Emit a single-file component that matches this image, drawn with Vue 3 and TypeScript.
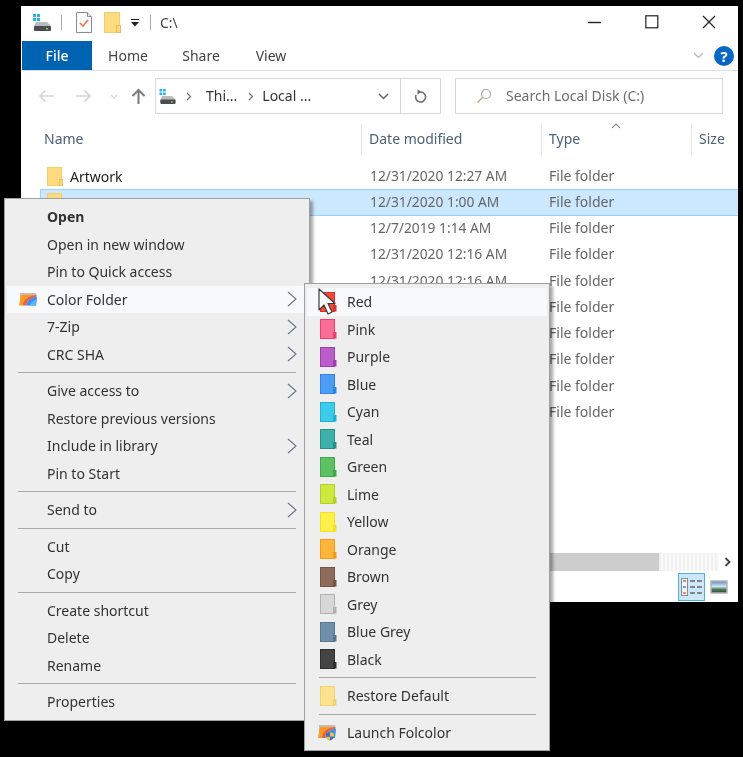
<template>
  <div class="screen">
    <div class="explorer">
      <header class="titlebar">
        <svg class="drive" width="20" height="18" viewBox="0 0 20 18">
          <path d="M1 1h3v3H1zM5 1h3v3H5zM1 5h3v3H1zM5 5h3v3H5z" fill="#1fb6ee" />
          <path d="M4 9h11l4 4v4H2v-4z" fill="#b9bcbd" />
          <rect x="2" y="13" width="17" height="5" rx="1" fill="#4a4d4f" />
          <rect x="14" y="15" width="2" height="1.5" fill="#5fe05f" />
        </svg>
        <i class="tick-sep first" />
        <svg class="title-doc" width="16" height="21" viewBox="0 0 16 21">
          <path d="M.5.5h11l4 4v16H.5z" fill="#fbfbfb" stroke="#8b8b8b" />
          <path d="M11.500.5v4h4" fill="#e6e6e6" stroke="#8b8b8b" />
          <path d="M4 11l3 3 5-6" fill="none" stroke="#ee7a50" stroke-width="1.600" />
        </svg>
        <svg class="title-folder" width="17" height="21" viewBox="0 0 17 21">
          <rect x=".5" y=".5" width="15" height="20" fill="#fddb7e" stroke="#f3cd6c" />
          <rect x="12.500" y="13.500" width="4" height="7" fill="#fbd878" stroke="#e9c05c" />
        </svg>
        <svg class="qa-caret" width="10" height="8" viewBox="0 0 10 8">
          <path d="M1 .5h8" stroke="#222" />
          <path d="M1 3h8L5 7.500z" fill="#222" />
        </svg>
        <i class="tick-sep second" />
        <span class="path-title">C:\</span>
        <div class="window-btns">
          <svg width="14" height="14" viewBox="0 0 14 14"><path d="M0 7.500h13" stroke="#222" stroke-width="1.400" /></svg>
          <svg width="14" height="14" viewBox="0 0 14 14"><rect x=".8" y=".8" width="12" height="12" fill="none" stroke="#222" stroke-width="1.200" /></svg>
          <svg width="14" height="14" viewBox="0 0 14 14"><path d="M1 1l12 12M13 1L1 13" stroke="#222" stroke-width="1.200" /></svg>
        </div>
      </header>

      <nav class="ribbon">
        <span class="tab file">File</span>
        <span class="tab home">Home</span>
        <span class="tab share">Share</span>
        <span class="tab view">View</span>
        <svg class="ribbon-chev" width="11" height="7" viewBox="0 0 11 7"><path d="M1 1l4.500 4.500L10 1" fill="none" stroke="#b5b5b5" stroke-width="1.200" /></svg>
        <span class="help">?</span>
      </nav>

      <div class="addressbar">
        <div class="nav-btns">
          <svg width="16" height="14" viewBox="0 0 16 14"><path d="M16 7H2M7.500 1.500L2 7l5.500 5.500" fill="none" stroke="#d6d6d6" stroke-width="1.700" /></svg>
          <svg width="16" height="14" viewBox="0 0 16 14"><path d="M0 7h14M8.500 1.500L14 7l-5.500 5.500" fill="none" stroke="#d6d6d6" stroke-width="1.700" /></svg>
          <svg width="8" height="5" viewBox="0 0 8 5"><path d="M1 1l3 3 3-3" fill="none" stroke="#d6d6d6" stroke-width="1.200" /></svg>
          <svg width="15" height="16" viewBox="0 0 15 16"><path d="M7.500 16V2M1.500 8l6-6 6 6" fill="none" stroke="#7b7b7b" stroke-width="2" /></svg>
        </div>
        <div class="crumbs">
          <svg class="crumb-drive" width="19" height="16" viewBox="0 0 20 18">
            <path d="M1 1h3v3H1zM5 1h3v3H5zM1 5h3v3H1zM5 5h3v3H5z" fill="#1fb6ee" />
            <path d="M4 9h11l4 4v4H2v-4z" fill="#b9bcbd" />
            <rect x="2" y="13" width="17" height="5" rx="1" fill="#4a4d4f" />
            <rect x="14" y="15" width="2" height="1.500" fill="#5fe05f" />
          </svg>
          <svg class="crumb-arrow" width="6" height="9" viewBox="0 0 6 9"><path d="M1 1l3.500 3.500L1 8" fill="none" stroke="#777" stroke-width="1.300" /></svg>
          <span class="crumb">Thi...</span>
          <svg class="crumb-arrow" width="6" height="9" viewBox="0 0 6 9"><path d="M1 1l3.500 3.500L1 8" fill="none" stroke="#777" stroke-width="1.300" /></svg>
          <span class="crumb">Local ...</span>
          <svg class="crumb-drop" width="11" height="7" viewBox="0 0 11 7"><path d="M1 1l4.500 4.500L10 1" fill="none" stroke="#666" stroke-width="1.500" /></svg>
          <span class="refresh">
            <svg width="13" height="15" viewBox="0 0 13 15"><path d="M7 3a5 5 0 1 1-5 3" fill="none" stroke="#707070" stroke-width="1.600" /><path d="M3.500 0.500l4.500 2.500-4.500 2.500z" fill="#707070" /></svg>
          </span>
        </div>
        <div class="search">
          <svg width="16" height="16" viewBox="0 0 16 16"><circle cx="10" cy="6" r="4.500" fill="none" stroke="#a9a9a9" stroke-width="1.200" /><path d="M6.800 9.200L1.500 14.500" stroke="#c9a98c" stroke-width="1.400" /></svg>
          <span>Search Local Disk (C:)</span>
        </div>
      </div>

      <div class="columns">
        <span class="col name">Name</span>
        <span class="col">Date modified</span>
        <span class="col">Type</span>
        <span class="col">Size</span>
        <svg class="sort" width="10" height="6" viewBox="0 0 10 6"><path d="M1 5l4-4 4 4" fill="none" stroke="#8e8e8e" stroke-width="1.100" /></svg>
      </div>

      <div class="files">
        <div v-for="(row, i) in rows" :key="i" class="file-row" :class="{ selected: i === 1 }">
          <span class="file-name">
            <svg width="16" height="19" viewBox="0 0 16 19">
              <rect x=".5" y=".5" width="14" height="18" fill="#fddb7e" stroke="#f3cd6c" />
              <rect x="12.500" y="12.500" width="3" height="6" fill="#fbd878" stroke="#e9c05c" />
            </svg>
            {{ row.name }}
          </span>
          <span class="file-date">{{ row.date }}</span>
          <span class="file-type">File folder</span>
        </div>
      </div>

      <div class="hscroll">
        <span class="thumb" />
        <span class="track" />
        <svg width="8" height="10" viewBox="0 0 8 10"><path d="M1.500 1l4 4-4 4" fill="none" stroke="#444" stroke-width="1.800" /></svg>
      </div>

      <div class="statusbar">
        <span class="view-btn active">
          <svg width="22" height="18" viewBox="0 0 22 18">
            <rect x=".5" y=".5" width="6" height="17" fill="#f4f4f4" stroke="#8b8b8b" />
            <path d="M2 3h3" stroke="#9a9a9a" stroke-width="2" />
            <path d="M2 9h3" stroke="#6da0ea" stroke-width="2" />
            <path d="M2 15h3" stroke="#e58a8a" stroke-width="2" />
            <path d="M9 3h5M16 3h5M9 9h5M16 9h5M9 15h5M16 15h5" stroke="#666" stroke-width="1.300" />
          </svg>
        </span>
        <svg class="view-thumb" width="18" height="14" viewBox="0 0 18 14">
          <defs>
            <linearGradient id="thumb-sky" x1="0" y1="0" x2="0" y2="1">
              <stop offset="0" stop-color="#4f86cc" />
              <stop offset=".45" stop-color="#d7e6ef" />
              <stop offset=".7" stop-color="#4e7a5c" />
              <stop offset="1" stop-color="#274a35" />
            </linearGradient>
          </defs>
          <rect x="1" y="1" width="16" height="12" fill="url(#thumb-sky)" stroke="#b5b5b5" stroke-width="1.500" />
        </svg>
      </div>
    </div>

    <!-- main context menu -->
    <div class="menu main-menu">
      <template v-for="(item, i) in mainItems" :key="i">
        <div v-if="item.sep" class="sep" />
        <div v-else class="item" :class="{ hover: item.hover, bold: item.bold }">
          <span class="icon-slot">
            <svg v-if="item.hover" width="20" height="14" viewBox="0 0 20 14">
              <path d="M2 1h16l1 3L2 13z" fill="#c4bdb4" />
              <path d="M1 13.500L3 3h15C10 4 6 7 4.500 13.500z" fill="#fb9a1c" />
              <path d="M4.500 13.500C6 7 10 4 18 3l.5 1.500C12 6 9 9 8 13.500z" fill="#ee5f3a" />
              <path d="M8 13.500C9 9 12 6 18.500 4.500l.5 1L18 13.500z" fill="#3f8df5" />
              <path d="M12 13.500c1-3 3-5 6.500-6L18 13.500z" fill="#58b8f7" />
            </svg>
          </span>
          <span>{{ item.label }}</span>
          <svg v-if="item.more" class="more" width="10" height="16" viewBox="0 0 10 16"><path d="M1 1l8 7-8 7" fill="none" stroke="#6c7489" stroke-width="1.100" /></svg>
        </div>
      </template>
    </div>

    <!-- Color Folder submenu -->
    <div class="menu sub-menu">
      <div v-for="(c, i) in colors" :key="c.name" class="item sub-item" :class="{ hover: i === 0 }">
        <svg class="swatch" width="17" height="20" viewBox="0 0 17 20">
          <rect x=".5" y=".5" width="14" height="19" :fill="c.fill" :stroke="c.edge" stroke-width="1" />
          <rect x="13" y="13" width="3.500" height="6.500" :fill="c.edge" />
        </svg>
        <span>{{ c.name }}</span>
      </div>
      <div class="sep sub-sep" />
      <div class="item sub-item">
        <svg class="swatch" width="17" height="20" viewBox="0 0 17 20">
          <rect x=".5" y=".5" width="14" height="19" fill="#ffe28e" stroke="#f3d175" />
          <rect x="13" y="13" width="3.500" height="6.500" fill="#f3d175" />
        </svg>
        <span>Restore Default</span>
      </div>
      <div class="sep sub-sep" />
      <div class="item sub-item">
        <svg class="launch" width="20" height="17" viewBox="0 0 20 17">
          <path d="M2 1h16l1 3L2 14z" fill="#c4bdb4" />
          <path d="M1 14L3 3h15C10 4 6 7 4.500 14z" fill="#fb9a1c" />
          <path d="M4.500 14C6 7 10 4 18 3l.5 1.500C12 6 9 9 8 14z" fill="#ee5f3a" />
          <path d="M8 14C9 9 12 6 18.500 4.500l.5 1L18 14z" fill="#3f8df5" />
          <path d="M13 8.500l-4 1v3c0 2 2 3 4 4z" fill="#2f6fd8" />
          <path d="M13 8.500l4 1v3c0 2-2 3-4 4z" fill="#f5c421" />
          <path d="M9 12.500h4v4c-2-1-4-2-4-4zM13 8.500l4 1v3h-4z" fill="#f5c421" />
          <path d="M9 9.500l4-1v4H9zM13 12.500h4c0 2-2 3-4 4z" fill="#2f6fd8" />
        </svg>
        <span>Launch Folcolor</span>
      </div>
    </div>

    <svg class="cursor" width="18" height="28" viewBox="0 0 18 28">
      <path d="M1 1v21l5-5 4 9 4-2-4-8.500h7z" fill="#fff" stroke="#3a3a3a" stroke-width="1.200" stroke-linejoin="round" />
    </svg>
  </div>
</template>

<script setup lang="ts">
type MenuEntry = { label?: string; sep?: boolean; more?: boolean; bold?: boolean; hover?: boolean }

// rows behind the two menus show no name or date in the picture
const rows = [
  { name: 'Artwork', date: '12/31/2020 12:27 AM' },
  { name: 'Games', date: '12/31/2020 1:00 AM' },
  { name: '', date: '12/7/2019 1:14 AM' },
  { name: '', date: '12/31/2020 12:16 AM' },
  { name: '', date: '12/31/2020 12:16 AM' },
  { name: '', date: '' },
  { name: '', date: '' },
  { name: '', date: '' },
  { name: '', date: '' },
  { name: '', date: '' },
]

const mainItems: MenuEntry[] = [
  { label: 'Open', bold: true },
  { label: 'Open in new window' },
  { label: 'Pin to Quick access' },
  { label: 'Color Folder', more: true, hover: true },
  { label: '7-Zip', more: true },
  { label: 'CRC SHA', more: true },
  { sep: true },
  { label: 'Give access to', more: true },
  { label: 'Restore previous versions' },
  { label: 'Include in library', more: true },
  { label: 'Pin to Start' },
  { sep: true },
  { label: 'Send to', more: true },
  { sep: true },
  { label: 'Cut' },
  { label: 'Copy' },
  { sep: true },
  { label: 'Create shortcut' },
  { label: 'Delete' },
  { label: 'Rename' },
  { sep: true },
  { label: 'Properties' },
]

const colors = [
  { name: 'Red', fill: '#f4483c', edge: '#d8332a' },
  { name: 'Pink', fill: '#fb6f96', edge: '#ee3f72' },
  { name: 'Purple', fill: '#bb5ccb', edge: '#9c3fae' },
  { name: 'Blue', fill: '#4d9df5', edge: '#2f83e6' },
  { name: 'Cyan', fill: '#3ccbe8', edge: '#21b1cf' },
  { name: 'Teal', fill: '#3eb0ac', edge: '#2a8f8b' },
  { name: 'Green', fill: '#5cc163', edge: '#43a64a' },
  { name: 'Lime', fill: '#cde83e', edge: '#b4cf2a' },
  { name: 'Yellow', fill: '#fff04a', edge: '#f2e02a' },
  { name: 'Orange', fill: '#ffb53c', edge: '#f59a14' },
  { name: 'Brown', fill: '#8f6b5a', edge: '#775343' },
  { name: 'Grey', fill: '#d8d8d8', edge: '#b2b2b2' },
  { name: 'Blue Grey', fill: '#6f8fa8', edge: '#557790' },
  { name: 'Black', fill: '#444444', edge: '#2e2e2e' },
]
</script>

<style>
html,
body {
  background: #000;
}
</style>

<style scoped>
.screen {
  position: relative;
  width: 743px;
  height: 757px;
  overflow: hidden;
  padding: 6px 5px 0 21px;
  box-sizing: border-box;
  background: #000;
  font-family: "Noto Sans", "Open Sans", sans-serif;
  font-size: 14px;
  color: #333;
  filter: blur(0.45px);
}

.explorer {
  display: flex;
  flex-direction: column;
  width: 717px;
  height: 596px;
  background: #fff;
}

.titlebar {
  display: flex;
  align-items: center;
  height: 35px;
  padding-bottom: 3px;
  box-sizing: border-box;
  flex: none;
}

.drive {
  margin-left: 11px;
}

.tick-sep {
  width: 1px;
  height: 15px;
  background: #a8a8a8;
}

.tick-sep.first {
  margin-left: 9px;
}

.title-doc {
  margin-left: 14px;
}

.title-folder {
  margin-left: 12px;
}

.qa-caret {
  margin-left: 9px;
  margin-top: 2px;
}

.tick-sep.second {
  margin-left: 10px;
}

.path-title {
  margin-left: 9px;
  color: #444;
}

.window-btns {
  margin-left: auto;
  display: flex;
  gap: 43px;
  padding-right: 22px;
  margin-top: -1px;
}

.ribbon {
  position: relative;
  display: flex;
  align-items: center;
  height: 29px;
  flex: none;
  border-bottom: 1px solid #dcdcdc;
  padding-left: 1px;
}

.tab {
  text-align: center;
  color: #444;
}

.tab.file {
  width: 70px;
  height: 29px;
  line-height: 29px;
  background: #0063b1;
  color: #fff;
  font-weight: 500;
}

.tab.home {
  width: 72px;
}

.tab.share {
  width: 74px;
}

.tab.view {
  width: 66px;
}

.ribbon-chev {
  margin-left: auto;
}

.help {
  width: 20px;
  height: 20px;
  margin: 0 4px 0 10px;
  border-radius: 50%;
  background: #0a66c4;
  color: #fff;
  text-align: center;
  font-weight: 700;
  font-size: 15px;
  line-height: 20px;
}

.addressbar {
  display: flex;
  align-items: center;
  height: 36px;
  margin-top: 7px;
  flex: none;
}

.nav-btns {
  display: flex;
  align-items: center;
  width: 134px;
  padding-left: 17px;
  box-sizing: border-box;
  gap: 0;
}

.nav-btns svg:nth-child(2) {
  margin-left: 22px;
}

.nav-btns svg:nth-child(3) {
  margin-left: 18px;
}

.nav-btns svg:nth-child(4) {
  margin-left: 13px;
}

.crumbs {
  display: flex;
  align-items: center;
  width: 286px;
  height: 36px;
  box-sizing: border-box;
  border: 1px solid #d9d9d9;
  padding-left: 2px;
}

.crumb-arrow {
  margin: 0 14px 0 9px;
}

.crumb {
  color: #333;
  margin-top: -1px;
}

.crumb + .crumb-arrow {
  margin-left: 11px;
  margin-right: 8px;
}

.crumb-drop {
  margin-left: auto;
  margin-right: 11px;
}

.refresh {
  display: flex;
  align-items: center;
  justify-content: center;
  width: 39px;
  height: 34px;
  border-left: 1px solid #d9d9d9;
}

.search {
  display: flex;
  align-items: center;
  width: 268px;
  height: 36px;
  margin-left: 14px;
  box-sizing: border-box;
  border: 1px solid #d9d9d9;
  padding-left: 20px;
  gap: 14px;
  color: #6d6d6d;
  line-height: 32px;
}

.columns {
  position: relative;
  display: grid;
  grid-template-columns: 340px 180px 150px 1fr;
  height: 31px;
  margin-top: 10px;
  flex: none;
}

.col {
  display: flex;
  align-items: center;
  padding: 0 0 2px 7px;
  border-left: 1px solid #e5e5e5;
  color: #4c607a;
  overflow: hidden;
}

.col.name {
  border-left: none;
  padding-left: 23px;
}

.sort {
  position: absolute;
  left: 590px;
  top: -1px;
}

.files {
  flex: 1;
  min-height: 0;
  padding-top: 8px;
}

.file-row {
  display: grid;
  grid-template-columns: 321px 180px 1fr;
  height: 26.25px;
  margin-left: 19px;
  box-sizing: border-box;
  align-items: center;
  border: 1px solid transparent;
  border-width: 1px 0 1px 1px;
}

.file-row.selected {
  background: #cce8ff;
  border-color: #99d1ff;
}

.file-name {
  display: flex;
  align-items: center;
  gap: 7px;
  padding-left: 6px;
  color: #222;
  min-height: 19px;
  line-height: 17px;
}

.file-date,
.file-type {
  padding-left: 8px;
  color: #666;
  font-size: 13.8px;
  line-height: 17px;
  margin-top: -2px;
}

.file-type {
  padding-left: 7px;
  font-size: 14px;
}

.hscroll {
  display: flex;
  align-items: center;
  height: 18px;
  flex: none;
  margin-left: 19px;
}

.thumb {
  width: 619px;
  height: 18px;
  background: #cdcdcd;
}

.track {
  flex: 1;
  height: 18px;
  background: repeating-linear-gradient(90deg, #f0f0f0 0 2px, #fafafa 2px 4px);
}

.hscroll svg {
  margin: 0 6px 0 5px;
}

.statusbar {
  display: flex;
  align-items: center;
  justify-content: flex-end;
  height: 31px;
  flex: none;
  padding-right: 10px;
}

.view-btn {
  display: flex;
  align-items: center;
  justify-content: center;
  width: 27px;
  height: 28px;
  box-sizing: border-box;
  background: #cde6f7;
  border: 1px solid #4db1e6;
}

.view-thumb {
  margin-left: 5px;
}

.menu {
  position: absolute;
  box-sizing: border-box;
  background: #eeeeee;
  border: 1px solid #a0a0a0;
  padding: 4px 2px 5px;
  box-shadow: 3px 3px 3px rgba(0, 0, 0, 0.35);
  color: #333;
}

.main-menu {
  left: 4px;
  top: 198px;
  width: 306px;
  height: 523px;
}

.sub-menu {
  left: 304px;
  top: 283px;
  width: 246px;
  height: 468px;
}

.item {
  position: relative;
  display: flex;
  align-items: center;
  height: 27.5px;
}

.item.hover {
  background: #f8f9fb;
}

.item.bold {
  font-weight: 700;
}

.icon-slot {
  display: flex;
  align-items: center;
  justify-content: center;
  width: 40px;
  padding-left: 2px;
  box-sizing: border-box;
}

.more {
  position: absolute;
  right: 10px;
  top: 5.5px;
}

.sep {
  height: 9px;
  position: relative;
}

.sep::after {
  content: "";
  position: absolute;
  left: 11px;
  right: 11px;
  top: 4px;
  height: 1px;
  background: #a9a9a9;
}

.sub-sep::after {
  left: 12px;
  right: 11px;
}

.swatch {
  margin-left: 13px;
  margin-right: 10px;
  flex: none;
}

.launch {
  margin-left: 10px;
  margin-right: 10px;
  flex: none;
}

.cursor {
  position: absolute;
  left: 318px;
  top: 288px;
}
</style>
